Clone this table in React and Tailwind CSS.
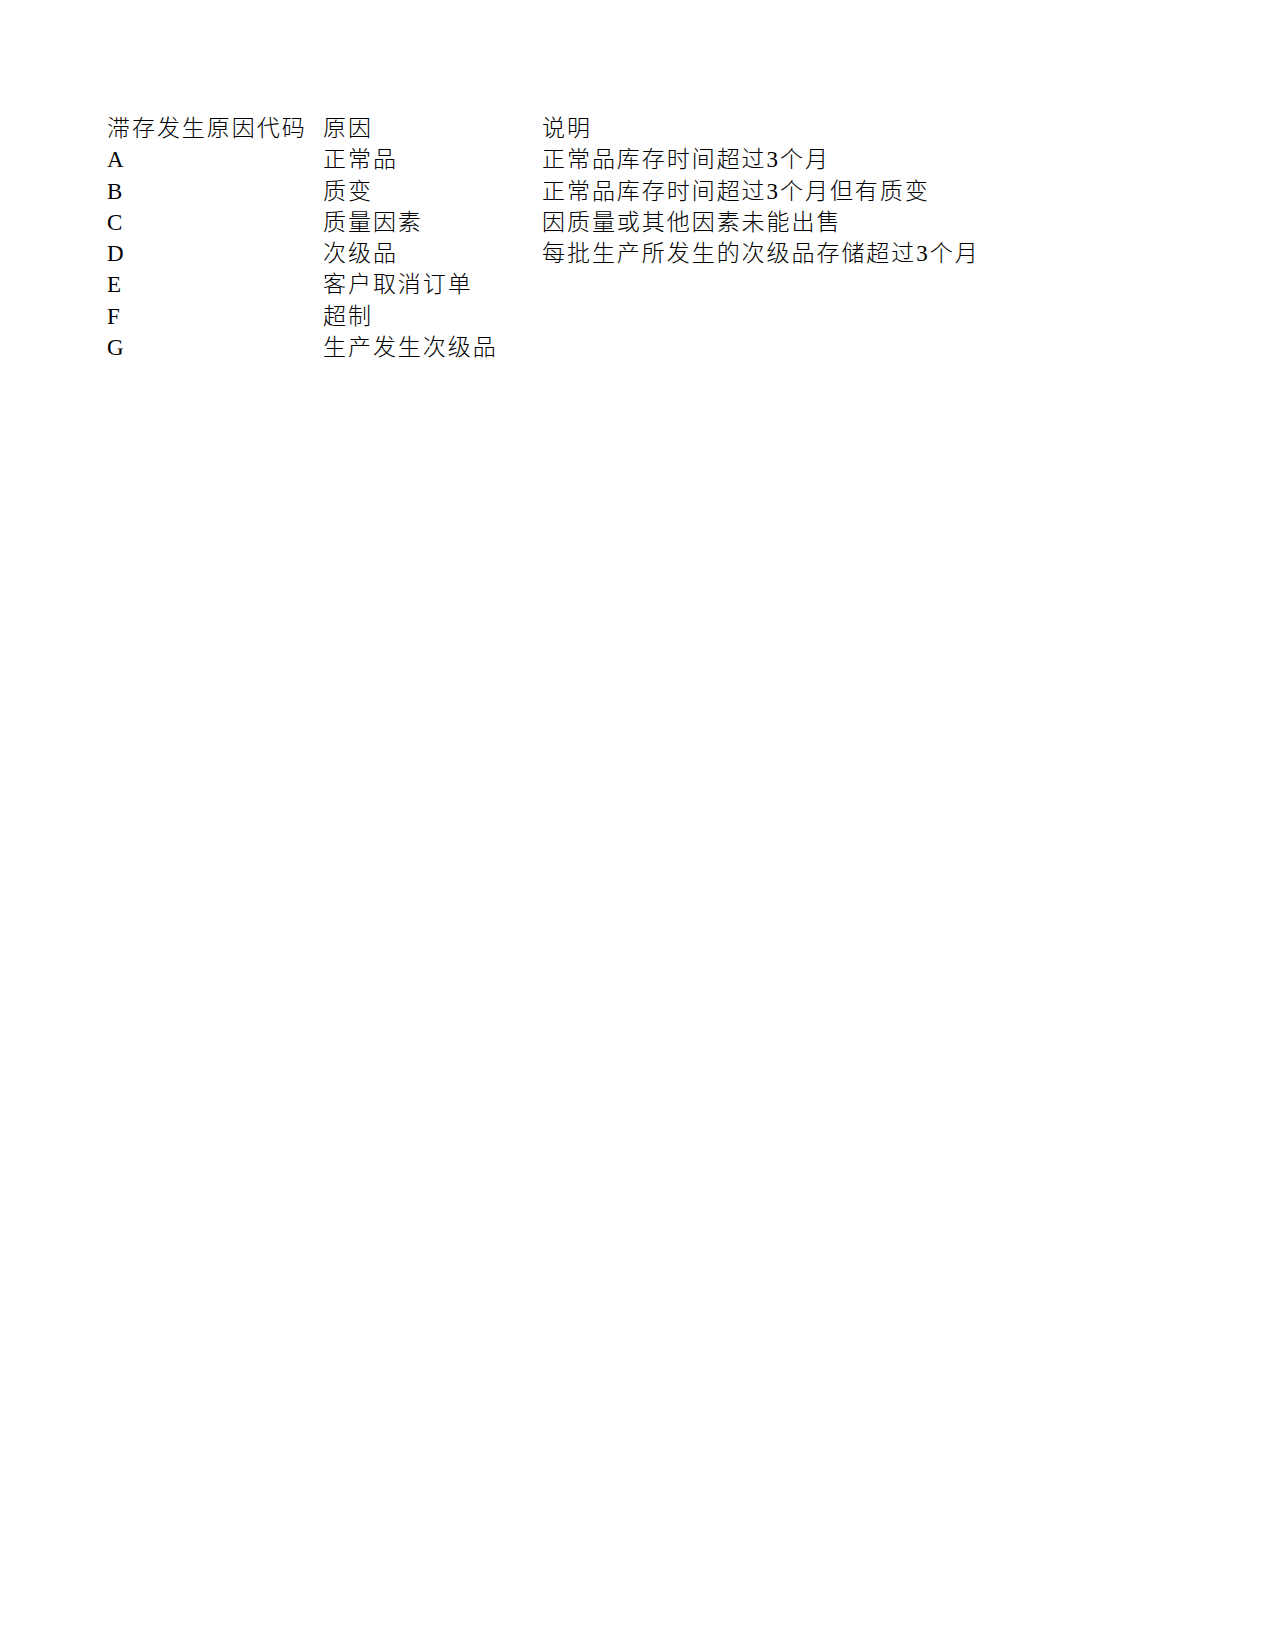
import React from 'react';

const rows = [
  ['滞存发生原因代码', '原因', '说明'],
  ['A', '正常品', '正常品库存时间超过3个月'],
  ['B', '质变', '正常品库存时间超过3个月但有质变'],
  ['C', '质量因素', '因质量或其他因素未能出售'],
  ['D', '次级品', '每批生产所发生的次级品存储超过3个月'],
  ['E', '客户取消订单', ''],
  ['F', '超制', ''],
  ['G', '生产发生次级品', ''],
];

const App = () => {
  return (
    <div className="w-[1275px] min-h-[1650px] bg-white text-black font-['Liberation_Serif','Noto_Sans_CJK_SC',serif] font-light text-[23px] leading-[31.3px] tracking-[1.95px] pt-[113px] pl-[107px]">
      {rows.map((row, i) => (
        <div key={i} className="grid grid-cols-[216px_219px_auto] h-[31.3px] whitespace-nowrap">
          <div>{row[0]}</div>
          <div>{row[1]}</div>
          <div>{row[2]}</div>
        </div>
      ))}
    </div>
  );
};

export default App;
